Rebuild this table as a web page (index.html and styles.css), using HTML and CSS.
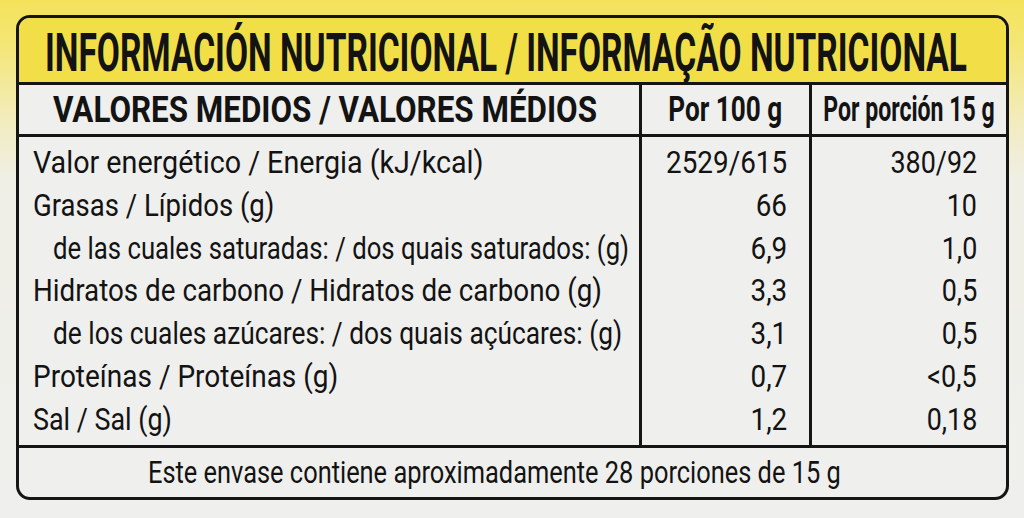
FILE: index.html
```html
<!DOCTYPE html>
<html lang="es">
<head>
<meta charset="utf-8">
<title>Información nutricional</title>
<link rel="stylesheet" href="styles.css">
</head>
<body>
<div class="label">
  <div class="title"><span class="t k-title">INFORMACIÓN NUTRICIONAL / INFORMAÇÃO NUTRICIONAL</span></div>
  <div class="head">
    <div class="c1"><span class="t k-h1">VALORES MEDIOS / VALORES MÉDIOS</span></div>
    <div class="c2"><span class="t mid k-h2">Por 100 g</span></div>
    <div class="c3"><span class="t mid k-h3">Por porción 15 g</span></div>
  </div>
  <div class="body">
    <div class="c1 names">
      <div><span class="t k-r1">Valor energético / Energia (kJ/kcal)</span></div>
      <div><span class="t k-r2">Grasas / Lípidos (g)</span></div>
      <div class="sub"><span class="t k-r3">de las cuales saturadas: / dos quais saturados: (g)</span></div>
      <div><span class="t k-r4">Hidratos de carbono / Hidratos de carbono (g)</span></div>
      <div class="sub"><span class="t k-r5">de los cuales azúcares: / dos quais açúcares: (g)</span></div>
      <div><span class="t k-r6">Proteínas / Proteínas (g)</span></div>
      <div><span class="t k-r7">Sal / Sal (g)</span></div>
    </div>
    <div class="c2 nums">
      <div><span class="t end">2529/615</span></div>
      <div><span class="t end">66</span></div>
      <div><span class="t end">6,9</span></div>
      <div><span class="t end">3,3</span></div>
      <div><span class="t end">3,1</span></div>
      <div><span class="t end">0,7</span></div>
      <div><span class="t end">1,2</span></div>
    </div>
    <div class="c3 nums">
      <div><span class="t end">380/92</span></div>
      <div><span class="t end">10</span></div>
      <div><span class="t end">1,0</span></div>
      <div><span class="t end">0,5</span></div>
      <div><span class="t end">0,5</span></div>
      <div><span class="t end">&lt;0,5</span></div>
      <div><span class="t end">0,18</span></div>
    </div>
  </div>
  <div class="foot"><span class="t k-foot">Este envase contiene aproximadamente 28 porciones de 15 g</span></div>
</div>
</body>
</html>
```

FILE: styles.css
```css
html, body {
  margin: 0;
  padding: 0;
}
body {
  width: 1024px;
  height: 518px;
  overflow: hidden;
  background: linear-gradient(to bottom, #f4e35a 0px, #f4e676 45px, #f2ecbe 120px, #efefe6 180px, #efefed 518px);
  font-family: Roboto, "Liberation Sans", sans-serif;
  color: #131313;
  padding: 15px 0 0 16px;
  box-sizing: border-box;
}
.label {
  width: 993px;
  height: 485px;
  box-sizing: border-box;
  border: 3px solid #151515;
  border-radius: 14px;
  overflow: hidden;
  background: #efefed;
  display: flex;
  flex-direction: column;
}
.t {
  display: inline-block;
  white-space: nowrap;
  transform-origin: left center;
  transform: scaleX(var(--k, 0.84));
}
.t.mid {
  transform-origin: center center;
}
.t.end {
  transform-origin: right center;
}
.k-title { --k: 0.632; }
.k-h1 { --k: 0.871; }
.k-h2 { --k: 0.747; }
.k-h3 { --k: 0.659; }
.k-foot { --k: 0.819; }
.k-r1 { --k: 0.896; }
.k-r2 { --k: 0.86; }
.k-r3 { --k: 0.804; }
.k-r4 { --k: 0.868; }
.k-r5 { --k: 0.822; }
.k-r6 { --k: 0.875; }
.k-r7 { --k: 0.84; }
.c2 .t.end { --k: 0.87; }
.c3 .t.end { --k: 0.84; }

.title {
  flex: none;
  height: 67px;
  background: #f2df48;
  border-bottom: 3px solid #151515;
  box-sizing: border-box;
  font-weight: bold;
  font-size: 53px;
  line-height: 71px;
  padding-left: 26px;
  white-space: nowrap;
}
.head, .body {
  flex: none;
  display: grid;
  grid-template-columns: 623px 170px minmax(0, 1fr);
}
.head > div, .body > div {
  min-width: 0;
}
.head {
  height: 52px;
  border-bottom: 3px solid #151515;
  box-sizing: border-box;
  font-weight: bold;
}
.head .c1 {
  font-size: 36px;
  line-height: 51px;
  padding-left: 34px;
}
.head .c2, .head .c3 {
  font-size: 35px;
  line-height: 50px;
  display: flex;
  justify-content: center;
}
.c1, .c2 {
  border-right: 3px solid #151515;
}
.body {
  height: 311px;
  border-bottom: 3px solid #151515;
  box-sizing: border-box;
  font-size: 32px;
  line-height: 42.8px;
}
.names, .nums {
  padding-top: 4px;
}
.names {
  padding-left: 14px;
}
.names .sub {
  padding-left: 20px;
}
.nums > div {
  display: flex;
  justify-content: flex-end;
}
.c2.nums {
  padding-right: 22px;
}
.c3.nums {
  padding-right: 29px;
}
.foot {
  flex: 1;
  font-size: 31px;
  line-height: 49px;
  padding-left: 129px;
  white-space: nowrap;
}
```
